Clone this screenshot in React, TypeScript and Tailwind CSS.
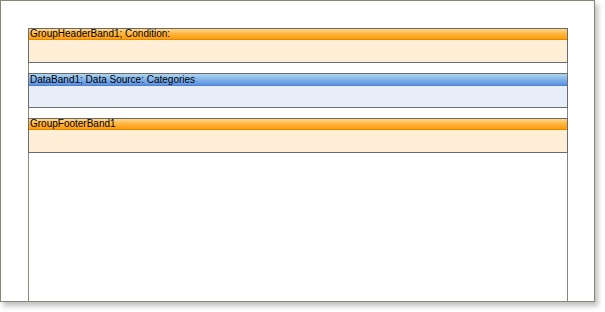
import React from 'react';

type BandProps = {
  title: string;
  kind: 'orange' | 'blue';
  headerH: string;
  bodyH: string;
};

function Band({ title, kind, headerH, bodyH }: BandProps) {
  const header =
    kind === 'orange'
      ? 'bg-gradient-to-b from-[#ffd68a] via-[#ffb43a] to-[#ff9c00] border-b border-[#e08a00]'
      : 'bg-gradient-to-b from-[#aed4ee] via-[#82b2e8] to-[#5c90e2] border-b border-[#4f7fcf]';
  const body = kind === 'orange' ? 'bg-[#ffefd7]' : 'bg-[#e7eefa]';
  return (
    <div className="border border-[#6b6b6b] -mx-px">
      <div className={`${header} ${headerH} flex items-center pl-[1px] text-[10px] leading-none text-black whitespace-nowrap`}>
        {title}
      </div>
      <div className={`${body} ${bodyH}`} />
    </div>
  );
}

export default function App() {
  return (
    <div className="w-[605px] h-[312px] bg-white" style={{ fontFamily: '"Liberation Sans", Arial, sans-serif' }}>
      <div className="w-[595px] h-[302px] border border-[#86867a] bg-white shadow-[3px_4px_5px_rgba(0,0,0,0.25)] pl-[27px] pt-[27px] flex">
        <div className="w-[540px] border-x border-[#86867a] flex flex-col gap-[10px]">
          <Band title="GroupHeaderBand1; Condition:" kind="orange" headerH="h-[11px]" bodyH="h-[22px]" />
          <Band title="DataBand1; Data Source: Categories" kind="blue" headerH="h-[12px]" bodyH="h-[21px]" />
          <Band title="GroupFooterBand1" kind="orange" headerH="h-[11px]" bodyH="h-[22px]" />
        </div>
      </div>
    </div>
  );
}
